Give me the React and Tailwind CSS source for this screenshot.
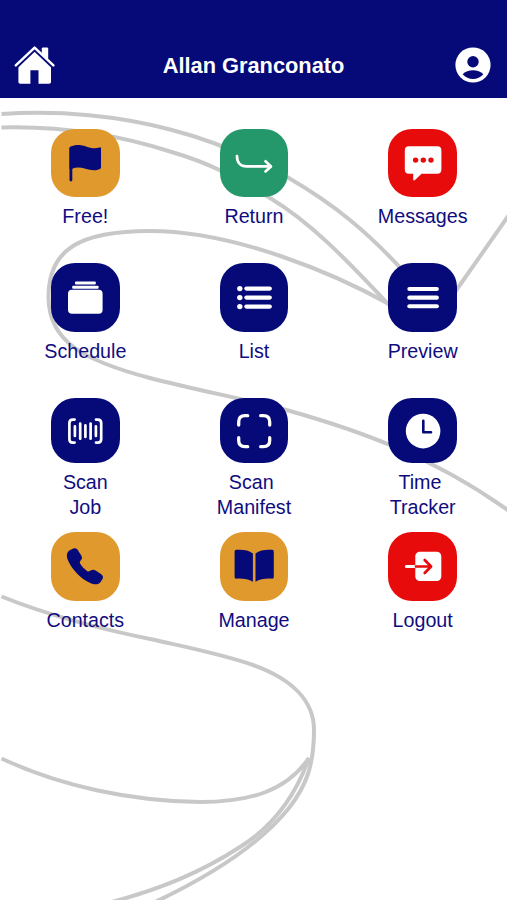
const NAVY = '#050a78'

// Every tile glyph is drawn on a 68x68 board, the size of the tile itself
const icons = {
  flag: (
    <g fill={NAVY}>
      <path d="M19.5 17.6 C24 15.2 30 15.6 35 17.4 C40 19.4 44.6 19.6 48.4 18.4 Q50 18 50 19.4 V38.6 Q50 39.6 49 40 C44.5 42 39 41.2 34.5 39.8 C30 38.3 25 38.3 21.5 39.4 V40 H18.5 V19.4 Q18.5 18.2 19.5 17.6Z" />
      <rect x="18.5" y="18" width="2.8" height="34.5" rx="1.4" />
    </g>
  ),
  back: (
    <g fill="none" stroke="#fff" strokeWidth="2.7" strokeLinecap="round" strokeLinejoin="round">
      <path d="M17 27.2 C17 33.5 20.5 37.4 26.5 37.4 H50.5" />
      <path d="M45.5 32.3 L51 37.4 L45.5 42.4" />
    </g>
  ),
  message: (
    <g>
      <path fill="#fff" d="M20 17.2 H48.2 Q52.4 17.2 52.4 21.4 V40.6 Q52.4 44.8 48.2 44.8 H32.6 L26 51 Q24.2 52.2 24.2 50.2 V44.8 H20 Q15.8 44.8 15.8 40.6 V21.4 Q15.8 17.2 20 17.2Z" />
      <g fill="#e80b0b">
        <circle cx="26.6" cy="31.1" r="2.7" />
        <circle cx="34.3" cy="31.1" r="2.7" />
        <circle cx="42" cy="31.1" r="2.7" />
      </g>
    </g>
  ),
  stack: (
    <g fill="#fff">
      <rect x="24" y="18.6" width="20.8" height="3" rx="1" />
      <rect x="21.2" y="22.7" width="26.4" height="3" rx="1" />
      <rect x="17" y="26.8" width="34.6" height="24" rx="4" />
    </g>
  ),
  list: (
    <g fill="#fff">
      <circle cx="19.8" cy="25.6" r="2.7" />
      <circle cx="19.8" cy="34.6" r="2.7" />
      <circle cx="19.8" cy="43.6" r="2.7" />
      <rect x="24.3" y="23.5" width="27.6" height="4.2" rx="2.1" />
      <rect x="24.3" y="32.5" width="27.6" height="4.2" rx="2.1" />
      <rect x="24.3" y="41.5" width="27.6" height="4.2" rx="2.1" />
    </g>
  ),
  menu: (
    <g fill="#fff">
      <rect x="18.3" y="24" width="31.6" height="4.1" rx="2" />
      <rect x="18.3" y="32.6" width="31.6" height="4.1" rx="2" />
      <rect x="18.3" y="41.2" width="31.6" height="4.1" rx="2" />
    </g>
  ),
  barcode: (
    <g fill="none" stroke="#fff" strokeWidth="2.7" strokeLinecap="round">
      <path d="M23.6 21.6 H21.8 Q18.4 21.6 18.4 25 V41.2 Q18.4 44.6 21.8 44.6 H23.6" />
      <path d="M45 21.6 H46.8 Q50.2 21.6 50.2 25 V41.2 Q50.2 44.6 46.8 44.6 H45" />
      <path d="M23.9 28.3 V37.9 M29.2 25.6 V40.7 M34.4 27.3 V38.9 M39.6 25.6 V40.7 M44.9 28.3 V37.9" />
    </g>
  ),
  scan: (
    <g fill="none" stroke="#fff" strokeWidth="3.3" strokeLinecap="round">
      <path d="M18.7 27.1 V24 Q18.7 17.7 25 17.7 H27.7" />
      <path d="M40.7 17.7 H43.4 Q49.7 17.7 49.7 24 V27.1" />
      <path d="M49.7 39.7 V42.6 Q49.7 48.7 43.4 48.7 H40.7" />
      <path d="M27.7 48.7 H25 Q18.7 48.7 18.7 42.6 V39.7" />
    </g>
  ),
  clock: (
    <g>
      <circle cx="34.1" cy="33.1" r="17.3" fill="#fff" />
      <path d="M34.3 22.8 V34.3 H42" fill="none" stroke={NAVY} strokeWidth="2.6" strokeLinecap="round" strokeLinejoin="round" />
    </g>
  ),
  phone: (
    <path
      fill={NAVY}
      d="M18.4 18.5 L22.3 16.4 Q24.8 15.6 26.4 17.6 L30.3 23.4 Q31.6 25.6 30.4 27.4 L29 29.4 Q28.4 30.4 29.2 31.8 C31 34.7 33.2 37 36 38.9 Q37.6 39.9 38.6 39 L40.8 38 Q42.6 37.2 44.6 38.4 L50.6 42.5 Q52.7 44.2 51.8 46.4 L49.6 50 C47.5 52.8 43.8 53.1 38.8 50.8 C29.8 46.6 21.6 38.3 17.3 29 C15 23.9 15.6 20.6 18.4 18.5Z"
    />
  ),
  book: (
    <g fill={NAVY}>
      <path d="M16.2 17.8 C22 17.4 28.6 17.7 32.9 21.6 V49.8 C28.6 46.8 22.2 46.4 16.2 46.7 Q14.6 46.6 14.6 45 V19.6 Q14.6 18 16.2 17.8Z" />
      <path d="M52.2 17.8 C46.4 17.4 39.8 17.7 35.5 21.6 V49.8 C39.8 46.8 46.2 46.4 52.2 46.7 Q53.8 46.6 53.8 45 V19.6 Q53.8 18 52.2 17.8Z" />
    </g>
  ),
  logout: (
    <g>
      <rect x="26.3" y="19.8" width="26" height="29.3" rx="4.5" fill="#fff" />
      <rect x="16" y="33.1" width="10.4" height="2.8" rx="1.2" fill="#fff" />
      <path d="M27 34.5 H41.5 M35.7 28 L42.1 34.5 L35.7 41" fill="none" stroke="#e80b0b" strokeWidth="2.7" strokeLinecap="round" strokeLinejoin="round" />
    </g>
  ),
}

const items = [
  { label: 'Free!', icon: 'flag', color: 'bg-[#e0992c]' },
  { label: 'Return', icon: 'back', color: 'bg-[#24986b]' },
  { label: 'Messages', icon: 'message', color: 'bg-[#e80b0b]' },
  { label: 'Schedule', icon: 'stack', color: 'bg-[#050a78]' },
  { label: 'List', icon: 'list', color: 'bg-[#050a78]' },
  { label: 'Preview', icon: 'menu', color: 'bg-[#050a78]' },
  { label: 'Scan\nJob', icon: 'barcode', color: 'bg-[#050a78]', short: true },
  { label: 'Scan \nManifest', icon: 'scan', color: 'bg-[#050a78]', short: true },
  { label: 'Time \nTracker', icon: 'clock', color: 'bg-[#050a78]', short: true },
  { label: 'Contacts', icon: 'phone', color: 'bg-[#e0992c]' },
  { label: 'Manage', icon: 'book', color: 'bg-[#e0992c]' },
  { label: 'Logout', icon: 'logout', color: 'bg-[#e80b0b]' },
]

function HomeIcon() {
  return (
    <svg width="42" height="40" viewBox="14 45 42 40">
      <path d="M41.8 48.6 Q41.8 47.4 43 47.4 H47 Q48.2 47.4 48.2 48.6 V60 L41.8 54Z" fill="#fff" />
      <path d="M18.4 66 L34.6 49.8 L51 66 V82 Q51 83.8 49.2 83.8 H38.5 V70.3 H30.4 V83.8 H20.2 Q18.4 83.8 18.4 82Z" fill="#fff" />
      <path d="M16.5 67.2 L34.6 50 L52.8 67.2" fill="none" stroke={NAVY} strokeWidth="2.6" />
      <path d="M15.8 65.4 L34.6 47.6 L53.4 65.4" fill="none" stroke="#fff" strokeWidth="2.5" strokeLinecap="round" strokeLinejoin="round" />
    </svg>
  )
}

function ProfileIcon() {
  return (
    <svg width="36" height="36" viewBox="0 0 36 36">
      <circle cx="18" cy="18" r="17.6" fill="#fff" />
      <circle cx="18" cy="14.7" r="5.7" fill={NAVY} />
      <path d="M7.6 27.2 C12.5 21.9 23.5 21.9 28.4 27.2 C23 33.6 13 33.6 7.6 27.2Z" fill={NAVY} />
    </svg>
  )
}

function Backdrop() {
  return (
    <svg className="absolute inset-0 h-full w-full" viewBox="0 0 507 900" fill="none" stroke="#c8c8c8" strokeWidth="4">
      <path d="M1.5 114 C60 110 120 116 170 129.5 C215 141 255 159 288 177.5 C335 205 368 232 405 273" />
      <path d="M1.5 127.5 C60 126 115 134 170 151.5 C210 163 240 179 270 198 C310 222 345 258 389 305" />
      <path d="M389 304 C335 274 235 231 150 231 C80 231 48.5 249 48.5 297 C48.5 342 85 361 150 378 C200 391 245 399 290 411 C350 428 430 454 509 511" />
      <path d="M509 215 L455 292" />
      <path d="M1.5 596.5 C50 616 110 631 155 640 C195 649 225 655 253 665 C292 679 314 701 314 730 C314 766 306 786 289 808 C260 844 212 875 155 902" />
      <path d="M1.5 758.5 C60 786 130 801 200 802 C252 802 287 790 309 758" />
      <path d="M309 758 C292 806 264 832 240 847 C200 873 160 889 112 902" />
    </svg>
  )
}

function Tile({ item }) {
  return (
    <button className="flex flex-col items-center">
      <span className={`flex w-[68.5px] items-start justify-center overflow-hidden rounded-[24px] ${item.short ? 'h-[65px]' : 'h-[68.5px]'} ${item.color}`}>
        <svg className="shrink-0" width="68" height="68" viewBox="0 0 68 68">{icons[item.icon]}</svg>
      </span>
      <span className="mt-[7px] text-center text-[19.7px] leading-[25.6px] whitespace-pre text-[#100c80]">{item.label}</span>
    </button>
  )
}

export default function App() {
  return (
    <div className="relative h-[900px] w-[507px] overflow-hidden bg-white font-['Liberation_Sans',Arial,sans-serif]">
      <Backdrop />
      <header className="relative flex h-[98.4px] items-center justify-between bg-[#050a78] px-[14px] pt-[32px]">
        <HomeIcon />
        <h1 className="pt-0.5 text-[21.8px] font-bold text-white">Allan Granconato</h1>
        <div className="flex w-[42px] justify-end pr-[2px]">
          <ProfileIcon />
        </div>
      </header>
      <main className="relative grid auto-rows-[134.4px] grid-cols-3 items-start pt-[30.6px] pl-px">
        {items.map((item) => (
          <Tile key={item.label} item={item} />
        ))}
      </main>
    </div>
  )
}
